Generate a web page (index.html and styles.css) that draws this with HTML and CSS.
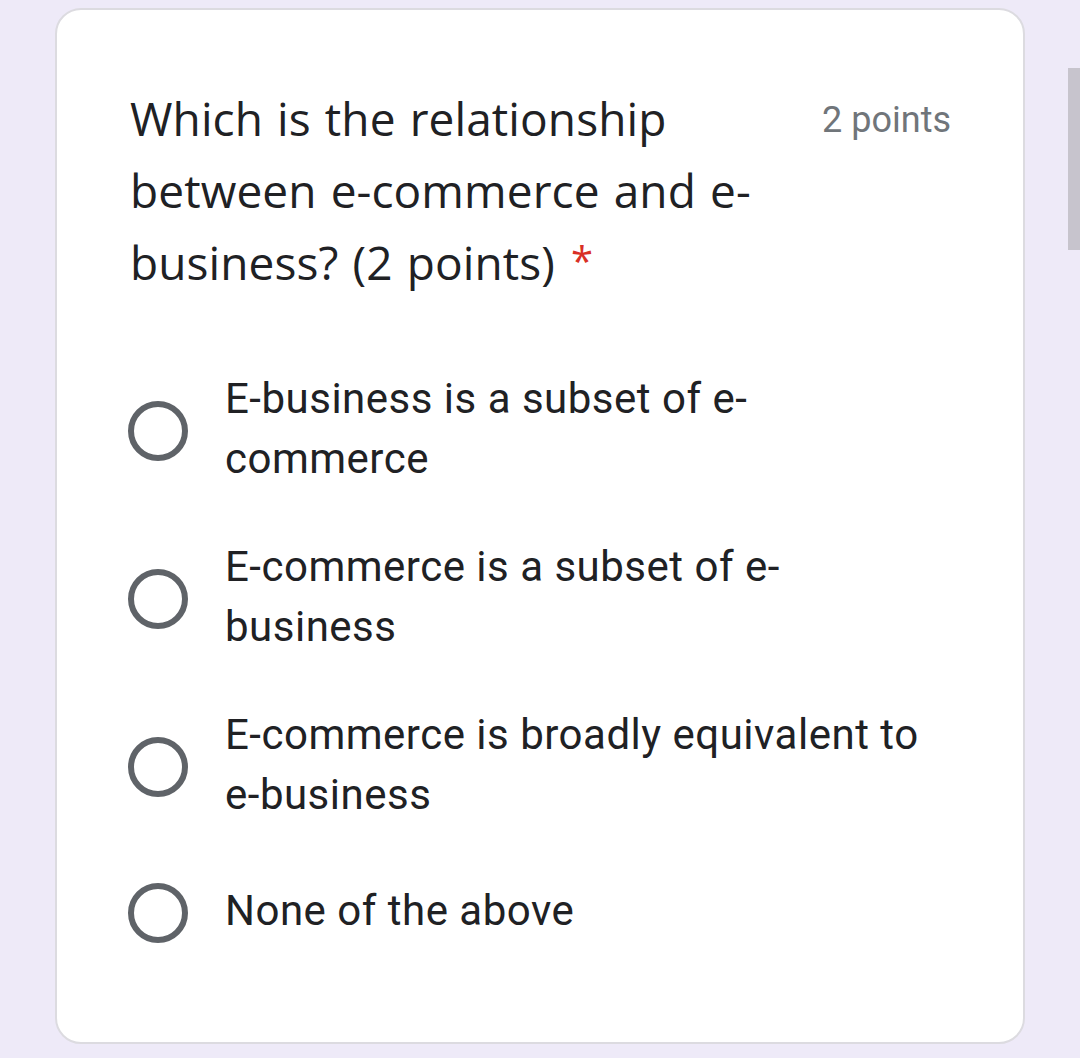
FILE: index.html
```html
<!DOCTYPE html>
<html lang="en">
<head>
<meta charset="utf-8">
<title>Question</title>
<link rel="stylesheet" href="styles.css">
</head>
<body>
<div class="page">
  <div class="card">
    <div class="header">
      <div class="title"><span class="qtext">Which is the relationship between e-commerce and e-business? (2 points)</span><span class="req">*</span></div>
      <div class="points">2 points</div>
    </div>
    <div class="options">
      <label class="option"><span class="radio"><span class="ring"></span></span><span class="label">E-business is a subset of e-commerce</span></label>
      <label class="option"><span class="radio"><span class="ring"></span></span><span class="label">E-commerce is a subset of e-business</span></label>
      <label class="option"><span class="radio"><span class="ring"></span></span><span class="label">E-commerce is broadly equivalent to e-business</span></label>
      <label class="option"><span class="radio"><span class="ring"></span></span><span class="label">None of the above</span></label>
    </div>
  </div>
</div>
<div class="scrollbar"></div>
</body>
</html>
```

FILE: styles.css
```css
html, body {
  margin: 0;
  padding: 0;
}
body {
  background: #eeeaf8;
  width: 1080px;
  height: 1058px;
  overflow: hidden;
  position: relative;
}
.page {
  padding: 8px 0 0 55px;
}
.card {
  box-sizing: border-box;
  width: 970px;
  height: 1036px;
  background: #ffffff;
  border: 2px solid #dcdbe0;
  border-radius: 26px;
  padding: 72px 72px 0 73px;
}
.header {
  display: flex;
  align-items: flex-start;
}
.title {
  flex: 1;
  font-family: "Open Sans", "Roboto", sans-serif;
  font-size: 46px;
  line-height: 72px;
  color: #202124;
  letter-spacing: 0.1px;
  word-spacing: 2px;
}
.req {
  display: inline-block;
  color: #d93025;
  margin-left: 16px;
  font-size: 40px;
  line-height: 40px;
  vertical-align: 4px;
}
.points {
  margin-left: 48px;
  font-family: "Roboto", sans-serif;
  font-size: 36px;
  line-height: 76px;
  color: #70757a;
  white-space: nowrap;
}
.options {
  display: flex;
  flex-direction: column;
  gap: 48px;
  margin-top: 71px;
  margin-left: -8px;
}
.option {
  display: flex;
  align-items: center;
}
.radio {
  width: 72px;
  height: 72px;
  flex: none;
  display: flex;
  align-items: center;
  justify-content: center;
  margin-top: 4px;
}
.ring {
  box-sizing: border-box;
  width: 60px;
  height: 60px;
  border: 6px solid #5f6368;
  border-radius: 50%;
}
.label {
  margin-left: 31px;
  font-family: "Roboto", sans-serif;
  font-size: 42px;
  line-height: 60px;
  letter-spacing: 0.5px;
  color: #202124;
}
.scrollbar {
  position: absolute;
  left: 1068px;
  top: 68px;
  width: 12px;
  height: 182px;
  background: #c7c4cd;
}
```
